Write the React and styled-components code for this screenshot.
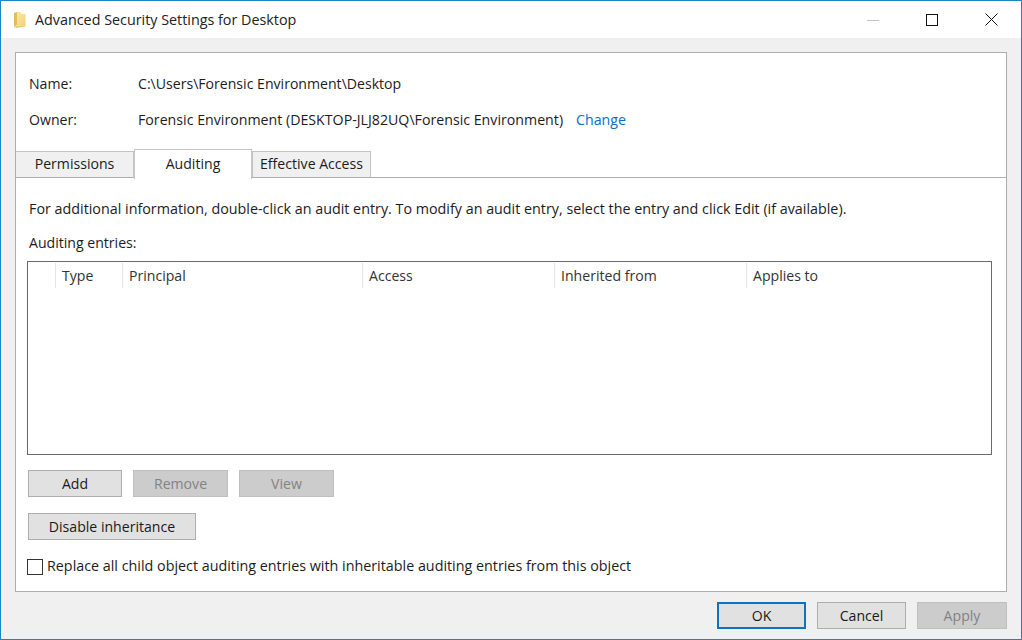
import React from "react";
import styled, { createGlobalStyle } from "styled-components";

const Global = createGlobalStyle`
  html, body { margin: 0; padding: 0; background: #f0f0f0; }
  * { box-sizing: border-box; }
`;

const Window = styled.div`
  width: 1022px; height: 640px;
  display: flex; flex-direction: column;
  background: #f0f0f0;
  border: 1px solid #1a86c8;
  font-family: "Open Sans", "Noto Sans", sans-serif;
  font-size: 14.1px;
  color: #1c1c1c;
  overflow: hidden;
`;
const TitleBar = styled.div`
  height: 37px; flex: none; background: #fff;
  display: flex; align-items: center;
  padding-left: 12px;
`;
const TitleText = styled.div`
  margin-left: 8px; font-size: 14.33px; flex: 1; color: #222; white-space: nowrap;
`;
const WinButtons = styled.div`
  display: flex; align-items: center; height: 100%;
`;
const WinButton = styled.div`
  width: ${p => p.$w}px; height: 100%;
  display: flex; align-items: center; justify-content: center;
`;
const Body = styled.div`
  flex: 1; display: flex; flex-direction: column;
  padding: 14px 14px 0 14px; min-height: 0;
`;
const Panel = styled.div`
  width: 992px; height: 540px; flex: none;
  background: #fff; border: 1px solid #adadad;
  display: flex; flex-direction: column;
`;
const Info = styled.div`
  height: 97px; flex: none;
  padding: 21px 0 0 13px;
  display: flex; flex-direction: column; gap: 17px;
`;
const InfoRow = styled.div`
  display: grid; grid-template-columns: 109px auto; height: 19px;
  line-height: 19px; justify-content: start; white-space: nowrap;
`;
const OwnerValue = styled.div`
  display: flex; gap: 13px; font-size: 14.2px;
`;
const LinkText = styled.span`
  color: #0a6cc4;
`;
const Tabs = styled.div`
  height: 28px; flex: none; display: flex; align-items: flex-end;
  border-bottom: 1px solid #adadad;
`;
const Tab = styled.div`
  width: ${p => p.$w}px;
  height: ${p => (p.$active ? 30 : 27)}px;
  margin-bottom: ${p => (p.$active ? -2 : -1)}px;
  position: relative;
  background: ${p => (p.$active ? "#fff" : "#f0f0f0")};
  border: 1px solid #c4c4c4;
  border-left-width: ${p => (p.$first ? 0 : 1)}px;
  border-bottom: ${p => (p.$active ? "none" : "1px solid #adadad")};
  text-align: center; line-height: ${p => (p.$active ? 27 : 23)}px;
  white-space: nowrap;
`;
const Content = styled.div`
  flex: 1; padding: 21px 14px 0 11px; display: flex; flex-direction: column; position: relative;
`;
const Para = styled.div`
  height: 19px; line-height: 19px; padding-left: 2px; white-space: nowrap; font-size: 14.32px;
`;
const Sub = styled(Para)`
  margin-top: 15px; font-size: 14.1px;
`;
const ListBox = styled.div`
  width: 965px; height: 194px; margin-top: 9px; flex: none;
  border: 1px solid #6a6a6a; background: #fff;
`;
const ListHeader = styled.div`
  display: flex; height: 25px; margin-top: 1px;
`;
const Col = styled.div`
  width: ${p => p.$w}px; flex: none; padding-left: 6px;
  border-right: ${p => (p.$last ? "none" : "1px solid #e5e5e5")};
  line-height: 25px; white-space: nowrap; color: #333;
`;
const BtnRow = styled.div`
  display: flex; gap: 11px; padding-left: 1px; margin-top: ${p => p.$mt}px;
`;
const Btn = styled.div`
  width: ${p => p.$w}px; height: 27px; flex: none;
  background: ${p => (p.$off ? "#cccccc" : "#e1e1e1")};
  border: 1px solid ${p => (p.$off ? "#bfbfbf" : "#adadad")};
  color: ${p => (p.$off ? "#838383" : "#1a1a1a")};
  text-align: center; line-height: 25px; white-space: nowrap;
`;
const CheckRow = styled.div`
  display: flex; align-items: center; gap: 4px; margin-top: 19px; height: 16px; white-space: nowrap;
  font-size: 14.32px; line-height: 16px;
`;
const Check = styled.div`
  width: 16px; height: 16px; border: 1px solid #333; background: #fff; flex: none;
`;
const CheckLabel = styled.span`
  margin-bottom: 2px;
`;
const Footer = styled.div`
  flex: 1; display: flex; justify-content: flex-end; gap: 11px;
  padding: 10px 0 0 0;
`;
const FootBtn = styled(Btn)`
  border: ${p => (p.$def ? "2px solid #0f72c0" : undefined)};
  line-height: ${p => (p.$def ? 24 : 25)}px;
`;

const Folder = () => (
  <svg width="14" height="18" viewBox="0 0 14 18">
    <defs>
      <linearGradient id="fold" x1="0" y1="0" x2="1" y2="1">
        <stop offset="0" stopColor="#f9e7a5" />
        <stop offset="1" stopColor="#f2d27a" />
      </linearGradient>
    </defs>
    <path d="M1 2 L4 1 V14 L1 16 Z" fill="#e3bd5a" />
    <path d="M4 1 H7.5 L8.5 3 H12.5 V15 L4 15 Z" fill="url(#fold)" />
    <path d="M1 16 L4 15 H12.5 V15.6 L3 17 Z" fill="#e9ca72" />
  </svg>
);

export default function App() {
  return (
    <Window>
      <Global />
      <TitleBar>
        <Folder />
        <TitleText>Advanced Security Settings for Desktop</TitleText>
        <WinButtons>
          <WinButton $w={58}>
            <svg width="12" height="12" viewBox="0 0 12 12"><path d="M0 6.5H12" stroke="#c4c4c4" /></svg>
          </WinButton>
          <WinButton $w={59}>
            <svg width="12" height="12" viewBox="0 0 12 12"><rect x=".5" y=".5" width="11" height="11" fill="none" stroke="#111" /></svg>
          </WinButton>
          <WinButton $w={60}>
            <svg width="13" height="13" viewBox="0 0 13 13"><path d="M.5.5L12.5 12.5M12.5.5L.5 12.5" stroke="#111" fill="none" /></svg>
          </WinButton>
        </WinButtons>
      </TitleBar>
      <Body>
        <Panel>
          <Info>
            <InfoRow><span>Name:</span><span>C:\Users\Forensic Environment\Desktop</span></InfoRow>
            <InfoRow>
              <span>Owner:</span>
              <OwnerValue>
                <span>Forensic Environment (DESKTOP-JLJ82UQ\Forensic Environment)</span>
                <LinkText>Change</LinkText>
              </OwnerValue>
            </InfoRow>
          </Info>
          <Tabs>
            <Tab $w={118} $first>Permissions</Tab>
            <Tab $w={118} $active>Auditing</Tab>
            <Tab $w={119}>Effective Access</Tab>
          </Tabs>
          <Content>
            <Para>For additional information, double-click an audit entry. To modify an audit entry, select the entry and click Edit (if available).</Para>
            <Sub>Auditing entries:</Sub>
            <ListBox>
              <ListHeader>
                <Col $w={28} />
                <Col $w={67}>Type</Col>
                <Col $w={240}>Principal</Col>
                <Col $w={192}>Access</Col>
                <Col $w={192}>Inherited from</Col>
                <Col $w={200} $last>Applies to</Col>
              </ListHeader>
            </ListBox>
            <BtnRow $mt={15}>
              <Btn $w={94}>Add</Btn>
              <Btn $w={95} $off>Remove</Btn>
              <Btn $w={95} $off>View</Btn>
            </BtnRow>
            <BtnRow $mt={16}>
              <Btn $w={168}>Disable inheritance</Btn>
            </BtnRow>
            <CheckRow>
              <Check />
              <CheckLabel>Replace all child object auditing entries with inheritable auditing entries from this object</CheckLabel>
            </CheckRow>
          </Content>
        </Panel>
        <Footer>
          <FootBtn $w={89} $def>OK</FootBtn>
          <FootBtn $w={89}>Cancel</FootBtn>
          <FootBtn $w={90} $off>Apply</FootBtn>
        </Footer>
      </Body>
    </Window>
  );
}
